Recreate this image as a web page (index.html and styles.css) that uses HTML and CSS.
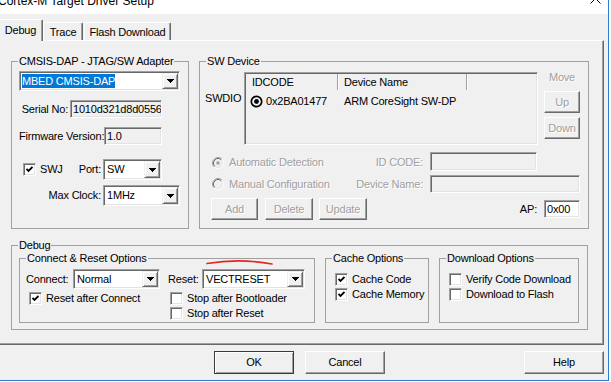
FILE: index.html
```
<!DOCTYPE html>
<html lang="en">
<head>
<meta charset="utf-8">
<title>Cortex-M Target Driver Setup</title>
<link rel="stylesheet" href="styles.css">
</head>
<body>
<div class="window">
  <div class="titlebar">
    <span class="title">Cortex-M Target Driver Setup</span>
    <svg class="close" width="11" height="4" viewBox="0 0 11 4"><path d="M0.5 -6.5 L10.5 3.5 M10.5 -6.5 L0.5 3.5" stroke="#000" stroke-width="1" fill="none"/></svg>
  </div>
  <div class="client">
    <div class="tabs">
      <div class="tab active t-debug">Debug</div>
      <div class="tab t-trace">Trace</div>
      <div class="tab t-flash">Flash Download</div>
    </div>
    <div class="panel">
      <div class="top-row">
        <fieldset class="group adapter">
          <legend>CMSIS-DAP - JTAG/SW Adapter</legend>
          <div class="gbody">
            <div class="combo c-dap"><span class="val"><span class="sel">MBED CMSIS-DAP</span></span><span class="drop"><svg width="7" height="4" viewBox="0 0 7 4"><path d="M0 0H7V1H6V2H5V3H4V4H3V3H2V2H1V1H0Z"/></svg></span></div>
            <div class="frow r-serial"><span class="lbl l-serial">Serial No:</span><span class="edit e-serial">1010d321d8d05560a7</span></div>
            <div class="frow r-fw"><span class="lbl l-fw">Firmware Version:</span><span class="edit e-fw">1.0</span></div>
            <div class="frow r-swj">
              <span class="cb"><svg width="7" height="7" viewBox="0 0 7 7"><polyline points="0.5,3 2.5,5 6.5,1" fill="none" stroke="#000" stroke-width="1.8"/></svg></span>
              <span class="l-swj">SWJ</span>
              <span class="lbl l-port">Port:</span>
              <div class="combo c-port"><span class="val">SW</span><span class="drop"><svg width="7" height="4" viewBox="0 0 7 4"><path d="M0 0H7V1H6V2H5V3H4V4H3V3H2V2H1V1H0Z"/></svg></span></div>
            </div>
            <div class="frow r-clk">
              <span class="lbl l-clk">Max Clock:</span>
              <div class="combo c-clk"><span class="val">1MHz</span><span class="drop"><svg width="7" height="4" viewBox="0 0 7 4"><path d="M0 0H7V1H6V2H5V3H4V4H3V3H2V2H1V1H0Z"/></svg></span></div>
            </div>
          </div>
        </fieldset>
        <fieldset class="group swdev">
          <legend>SW Device</legend>
          <div class="gbody">
            <div class="sw-top">
              <span class="swdio">SWDIO</span>
              <div class="list">
                <div class="lv-head"><span class="lv-c1">IDCODE</span><span class="lv-c2">Device Name</span><span class="lv-c3"></span></div>
                <div class="lv-row">
                  <span class="lv-c1"><svg width="13" height="13" viewBox="0 0 13 13"><circle cx="6.5" cy="6.5" r="5.2" fill="none" stroke="#000" stroke-width="1.7"/><circle cx="6.5" cy="6.5" r="2.4" fill="#000"/></svg>0x2BA01477</span>
                  <span class="lv-c2">ARM CoreSight SW-DP</span>
                </div>
              </div>
              <div class="move-col">
                <span class="move-lbl dis">Move</span>
                <div class="btn dis b-up">Up</div>
                <div class="btn dis b-down">Down</div>
              </div>
            </div>
            <div class="sw-row ra">
              <span class="opt dis"><svg width="12" height="12" viewBox="0 0 12 12"><circle cx="6" cy="6" r="4" fill="#f0f0f0"/><path d="M2.11 9.89A5.5 5.5 0 0 1 9.89 2.11" stroke="#a0a0a0" fill="none"/><path d="M9.89 2.11A5.5 5.5 0 0 1 2.11 9.89" stroke="#fff" fill="none"/><path d="M2.82 9.18A4.5 4.5 0 0 1 9.18 2.82" stroke="#696969" fill="none"/><path d="M9.18 2.82A4.5 4.5 0 0 1 2.82 9.18" stroke="#e3e3e3" fill="none"/><circle cx="6" cy="6" r="1.8" fill="#a0a0a0"/></svg>Automatic Detection</span>
              <span class="sw-lbl dis">ID CODE:</span>
              <span class="edit e-id"></span>
            </div>
            <div class="sw-row rb">
              <span class="opt dis"><svg width="12" height="12" viewBox="0 0 12 12"><circle cx="6" cy="6" r="4" fill="#f0f0f0"/><path d="M2.11 9.89A5.5 5.5 0 0 1 9.89 2.11" stroke="#a0a0a0" fill="none"/><path d="M9.89 2.11A5.5 5.5 0 0 1 2.11 9.89" stroke="#fff" fill="none"/><path d="M2.82 9.18A4.5 4.5 0 0 1 9.18 2.82" stroke="#696969" fill="none"/><path d="M9.18 2.82A4.5 4.5 0 0 1 2.82 9.18" stroke="#e3e3e3" fill="none"/></svg>Manual Configuration</span>
              <span class="sw-lbl dis">Device Name:</span>
              <span class="edit e-name"></span>
            </div>
            <div class="sw-row rc">
              <span class="btns">
                <span class="btn dis b-add">Add</span>
                <span class="btn dis b-del">Delete</span>
                <span class="btn dis b-upd">Update</span>
              </span>
              <span class="ap-lbl">AP:</span>
              <span class="edit e-ap">0x00</span>
            </div>
          </div>
        </fieldset>
      </div>
      <fieldset class="group debug">
        <legend>Debug</legend>
        <div class="gbody">
          <fieldset class="group conn">
            <legend>Connect &amp; Reset Options</legend>
            <div class="gbody">
              <svg class="scribble" width="72" height="9" viewBox="0 0 72 9"><path d="M2 5.5 C 20 2.5, 45 2, 67 6" stroke="#e8251f" stroke-width="1.6" fill="none" stroke-linecap="round"/></svg>
              <div class="cr1">
                <span class="l-conn">Connect:</span>
                <div class="combo c-conn"><span class="val">Normal</span><span class="drop"><svg width="7" height="4" viewBox="0 0 7 4"><path d="M0 0H7V1H6V2H5V3H4V4H3V3H2V2H1V1H0Z"/></svg></span></div>
                <span class="l-reset">Reset:</span>
                <div class="combo c-reset"><span class="val">VECTRESET</span><span class="drop"><svg width="7" height="4" viewBox="0 0 7 4"><path d="M0 0H7V1H6V2H5V3H4V4H3V3H2V2H1V1H0Z"/></svg></span></div>
              </div>
              <div class="cr2">
                <div class="colA">
                  <div class="chk"><span class="cb"><svg width="7" height="7" viewBox="0 0 7 7"><polyline points="0.5,3 2.5,5 6.5,1" fill="none" stroke="#000" stroke-width="1.8"/></svg></span>Reset after Connect</div>
                </div>
                <div class="colB">
                  <div class="chk"><span class="cb"></span>Stop after Bootloader</div>
                  <div class="chk"><span class="cb"></span>Stop after Reset</div>
                </div>
              </div>
            </div>
          </fieldset>
          <fieldset class="group cache">
            <legend>Cache Options</legend>
            <div class="gbody">
              <div class="chk"><span class="cb"><svg width="7" height="7" viewBox="0 0 7 7"><polyline points="0.5,3 2.5,5 6.5,1" fill="none" stroke="#000" stroke-width="1.8"/></svg></span>Cache Code</div>
              <div class="chk"><span class="cb"><svg width="7" height="7" viewBox="0 0 7 7"><polyline points="0.5,3 2.5,5 6.5,1" fill="none" stroke="#000" stroke-width="1.8"/></svg></span>Cache Memory</div>
            </div>
          </fieldset>
          <fieldset class="group dl">
            <legend>Download Options</legend>
            <div class="gbody">
              <div class="chk"><span class="cb"></span>Verify Code Download</div>
              <div class="chk"><span class="cb"></span>Download to Flash</div>
            </div>
          </fieldset>
        </div>
      </fieldset>
    </div>
    <div class="actions">
      <div class="btn act default">OK</div>
      <div class="btn act b-cancel">Cancel</div>
      <div class="btn act b-help">Help</div>
    </div>
  </div>
</div>
</body>
</html>
```
FILE: styles.css
```
* { box-sizing: border-box; }
html, body { margin: 0; padding: 0; }
body {
  width: 611px; height: 382px; overflow: hidden; background: #fff;
  font-family: "Liberation Sans", Arial, sans-serif; font-size: 11px; line-height: 13px;
  letter-spacing: -0.2px; color: #000;
}
.window {
  width: 609px; height: 381px; display: flex; flex-direction: column; background: #f0f0f0;
  border-right: 1px solid #2b7cd3; border-bottom: 1px solid #2b7cd3;
}
.titlebar {
  height: 14px; flex: none; background: #fff; display: flex;
  justify-content: space-between; align-items: flex-start; overflow: hidden;
}
.title { font-size: 12px; line-height: 14px; letter-spacing: 0; margin: -6px 0 0 -2px; white-space: nowrap; }
.close { margin-right: 7px; }
.client { flex: 1; padding: 5px 4px 0 0; display: flex; flex-direction: column; }

.tabs { display: flex; align-items: flex-end; height: 22px; margin: 0 0 -1px -2px; position: relative; z-index: 1; flex: none; }
.tab {
  height: 18px; margin-bottom: 1px; padding-top: 3px; text-align: center; background: #f0f0f0;
  border: 1px solid; border-color: #fff #696969 transparent #fff; border-bottom: 0;
  border-radius: 2px 2px 0 0; box-shadow: inset -1px 0 #a0a0a0;
}
.tab.active { height: 22px; margin-bottom: 0; padding-top: 4px; }
.t-debug { width: 45px; }
.t-trace { width: 40px; }
.t-flash { width: 87px; margin-left: 1px; }

.panel {
  height: 305px; flex: none; margin-left: -1px; padding: 14px 14px 0 11px;
  border: 1px solid; border-color: #fff #696969 #696969 #fff; box-shadow: inset -1px -1px #a0a0a0;
}
.top-row { display: flex; gap: 10px; }

.group { margin: 0; padding: 0; border: 1px solid #a0a0a0; min-width: 0; }
.group > legend { margin-left: 6px; padding: 0 1px; line-height: 13px; }

.adapter { width: 178px; flex: none; }
.adapter > .gbody { padding: 3px 0 0 7px; }
.frow { display: flex; align-items: center; }
.lbl { flex: none; text-align: right; white-space: nowrap; }
.r-serial { margin-top: 9px; }
.l-serial { width: 49px; margin-right: 2px; }
.r-fw { margin-top: 9px; }
.l-fw { width: 82px; margin-right: 3px; }
.r-swj { margin-top: 14px; height: 21px; }
.r-swj .cb { margin-left: 4px; }
.l-swj { width: 33px; margin-left: 4px; flex: none; }
.l-port { width: 28px; margin-right: 2px; }
.r-clk { margin-top: 5px; height: 21px; }
.l-clk { width: 82px; margin-right: 2px; }

.combo {
  display: flex; flex: none; padding: 1px; background: #fff;
  border: 1px solid; border-color: #a0a0a0 #fff #fff #a0a0a0;
  box-shadow: inset 1px 1px #696969, inset -1px -1px #e3e3e3;
}
.combo .val { flex: 1; display: flex; align-items: center; padding-left: 2px; white-space: nowrap; overflow: hidden; }
.drop {
  width: 16px; flex: none; display: flex; align-items: center; justify-content: center; background: #f0f0f0;
  border: 1px solid; border-color: #f0f0f0 #696969 #696969 #f0f0f0;
  box-shadow: inset 1px 1px #fff, inset -1px -1px #a0a0a0;
}
.sel { background: #0078d7; color: #fff; line-height: 14px; }
.c-dap { width: 161px; height: 20px; }
.c-dap .val { padding-left: 1px; }
.c-port { width: 59px; height: 21px; }
.c-clk { width: 77px; height: 21px; }
.c-conn { width: 87px; height: 20px; }
.c-reset { width: 103px; height: 20px; }

.edit {
  display: flex; align-items: center; flex: none; padding: 0 2px; white-space: nowrap; overflow: hidden;
  border: 1px solid; border-color: #a0a0a0 #fff #fff #a0a0a0;
  box-shadow: inset 1px 1px #696969, inset -1px -1px #e3e3e3; background: #f0f0f0;
}
.e-serial { width: 92px; height: 18px; }
.e-fw { width: 58px; height: 18px; }
.e-id { width: 107px; height: 19px; }
.e-name { width: 150px; height: 18px; }
.e-ap { width: 36px; height: 18px; background: #fff; }

.cb {
  width: 13px; height: 13px; flex: none; display: flex; align-items: center; justify-content: center;
  background: #fff; border: 1px solid; border-color: #a0a0a0 #fff #fff #a0a0a0;
  box-shadow: inset 1px 1px #696969, inset -1px -1px #e3e3e3;
}
.chk { display: flex; align-items: center; height: 13px; white-space: nowrap; }
.chk .cb { margin-right: 4px; }

.btn {
  display: flex; align-items: center; justify-content: center; flex: none; background: #f0f0f0;
  border: 1px solid; border-color: #fff #696969 #696969 #fff; box-shadow: inset -1px -1px #a0a0a0;
}
.btn.default { border-color: #3a3a3a; box-shadow: inset 1px 1px #fff, inset -1px -1px #a0a0a0; }
.dis { color: #a0a0a0; text-shadow: 1px 1px 0 #fff; }

.swdev { flex: 1; }
.swdev > .gbody { padding: 4px 0 8px 0; }
.sw-top { display: flex; align-items: flex-start; }
.swdio { width: 44px; padding-left: 5px; margin-top: 20px; flex: none; }
.list {
  width: 294px; height: 73px; flex: none; padding: 1px;
  border: 1px solid; border-color: #a0a0a0 #fff #fff #a0a0a0;
  box-shadow: inset 1px 1px #696969, inset -1px -1px #e3e3e3;
}
.lv-head { display: flex; height: 16px; }
.lv-head span { line-height: 16px; }
.lv-c1 { width: 92px; padding-left: 6px; flex: none; white-space: nowrap; }
.lv-c2 { width: 129px; padding-left: 6px; flex: none; white-space: nowrap; }
.lv-c3 { flex: 1; }
.lv-head .lv-c1, .lv-head .lv-c2 { border-right: 1px solid #a0a0a0; box-shadow: 1px 0 #fff; }
.lv-row { display: flex; align-items: center; height: 18px; margin-top: 2px; }
.lv-row .lv-c1 { display: flex; align-items: center; padding-left: 4px; }
.lv-row .lv-c1 svg { margin-right: 3px; flex: none; }
.move-col { margin-left: 6px; width: 36px; flex: none; display: flex; flex-direction: column; }
.move-lbl { line-height: 11px; text-align: center; }
.b-up { margin-top: 8px; height: 22px; }
.b-down { margin-top: 4px; height: 22px; }

.sw-row { display: flex; align-items: center; }
.ra { margin-top: 7px; height: 19px; }
.ra .opt, .ra .sw-lbl { padding-top: 2px; }
.rb { margin-top: 4px; height: 18px; }
.rc { margin-top: 5px; height: 22px; }
.opt { width: 140px; flex: none; padding-left: 12px; display: flex; align-items: center; white-space: nowrap; }
.opt svg { margin-right: 5px; flex: none; }
.sw-lbl { width: 83px; flex: none; text-align: right; margin-right: 7px; white-space: nowrap; }
.btns { width: 180px; flex: none; padding-left: 11px; display: flex; }
.b-add { width: 47px; height: 22px; }
.b-del { width: 48px; height: 22px; margin-left: 7px; }
.b-upd { width: 48px; height: 22px; margin-left: 6px; }
.ap-lbl { width: 157px; flex: none; text-align: right; margin-right: 7px; }

.debug { margin: 10px 1px 0 0; }
.debug > .gbody { display: flex; gap: 10px; padding: 0 8px 6px 7px; }
.conn { width: 296px; flex: none; }
.conn > .gbody { padding: 4px 0 2px 6px; position: relative; }
.scribble { position: absolute; left: 185px; top: -7px; }
.cr1 { display: flex; align-items: center; height: 20px; }
.l-conn { width: 45px; margin-right: 2px; flex: none; }
.l-reset { width: 32px; margin-left: 8px; margin-right: 2px; flex: none; }
.cr2 { display: flex; margin-top: 3px; }
.colA { width: 144px; padding-left: 3px; flex: none; }
.colB .chk + .chk { margin-top: 2px; }
.cache { width: 104px; flex: none; }
.dl { width: 140px; flex: none; }
.cache > .gbody, .dl > .gbody { padding: 8px 0 0 9px; }
.cache .chk + .chk, .dl .chk + .chk { margin-top: 2px; }

.actions { display: flex; height: 23px; margin-top: 6px; padding-left: 214px; flex: none; }
.act { width: 80px; height: 23px; }
.b-cancel { margin-left: 11px; }
.b-help { margin-left: auto; }
```
